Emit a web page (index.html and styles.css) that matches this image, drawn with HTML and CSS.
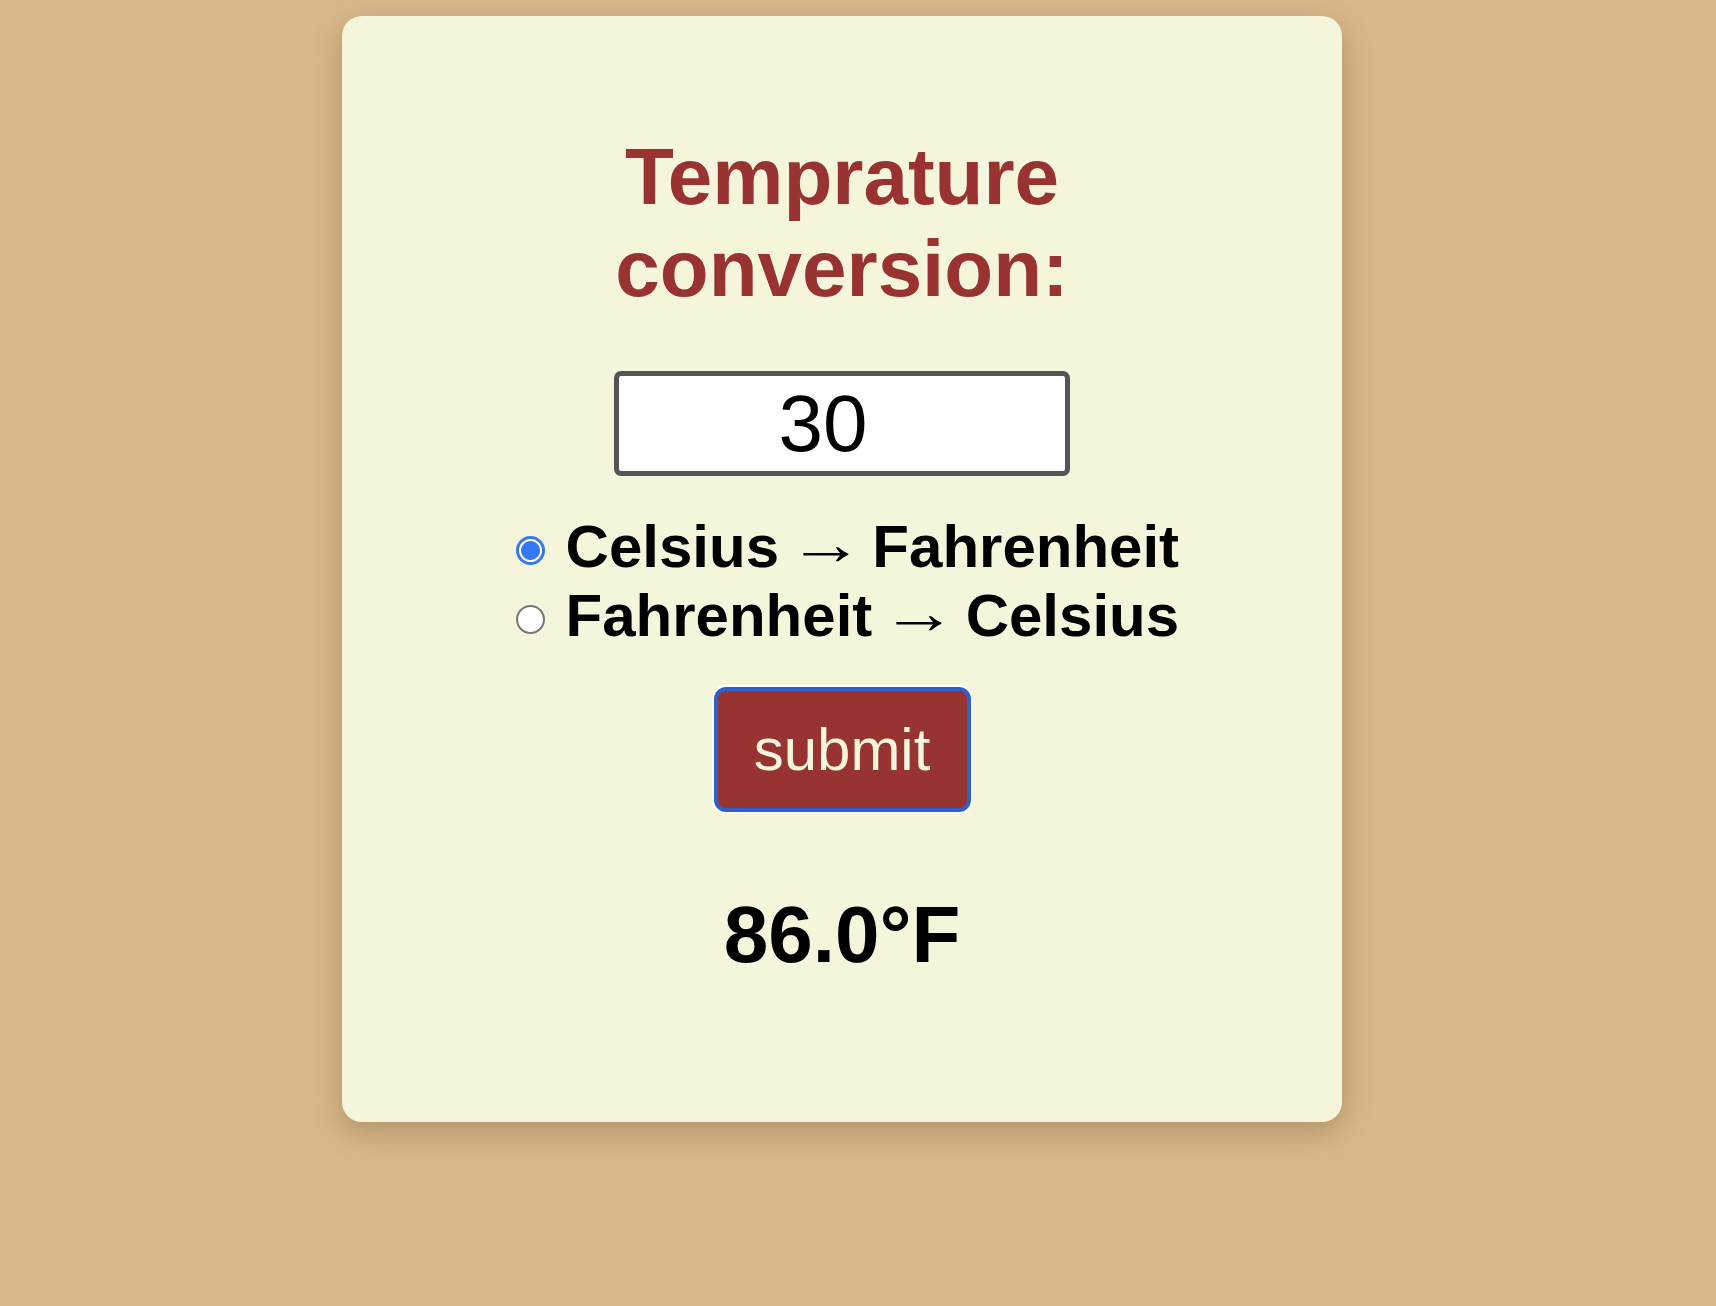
FILE: index.html
```html
<!DOCTYPE html>
<html lang="en">
<head>
<meta charset="utf-8">
<title>Temprature conversion</title>
<link rel="stylesheet" href="styles.css">
</head>
<body>
<main class="card">
  <h1 class="title">Temprature conversion:</h1>
  <input class="temp-input" type="text" inputmode="decimal" value="30">
  <div class="options">
    <label class="option"><input class="radio" type="radio" name="mode" checked> Celsius <span class="arrow">→</span> Fahrenheit</label>
    <label class="option"><input class="radio" type="radio" name="mode"> Fahrenheit <span class="arrow">→</span> Celsius</label>
  </div>
  <button class="submit" type="button">submit</button>
  <p class="result">86.0°F</p>
</main>
</body>
</html>
```
FILE: styles.css
```css
html, body {
  margin: 0;
  padding: 0;
}
body {
  background: #d7b88b;
  font-family: "Liberation Sans", Arial, sans-serif;
  min-height: 1306px;
  padding-top: 16px;
  box-sizing: border-box;
}
.card {
  width: 1000px;
  box-sizing: border-box;
  margin-left: 342px;
  background: #f5f5dc;
  border-radius: 20px;
  box-shadow: 0 10px 30px rgba(90, 60, 20, 0.3);
  padding: 115px 0 141px;
  display: flex;
  flex-direction: column;
  align-items: center;
  text-align: center;
}
.title {
  margin: 0;
  max-width: 600px;
  font-size: 80px;
  line-height: 92px;
  font-weight: bold;
  color: #983331;
}
.temp-input {
  margin: 56px 0 0;
  width: 456px;
  height: 105px;
  box-sizing: border-box;
  border: 5px solid #555555;
  border-radius: 7px;
  background: #ffffff;
  padding: 0 38px 0 0;
  font-family: "Liberation Sans", Arial, sans-serif;
  font-size: 80px;
  line-height: 92px;
  color: #000000;
  text-align: center;
  outline: none;
}
.options {
  margin-top: 36px;
  display: flex;
  flex-direction: column;
  align-items: center;
}
.option {
  display: block;
  font-size: 60px;
  line-height: 69px;
  font-weight: bold;
  color: #000000;
  white-space: nowrap;
  padding-left: 6px;
  word-spacing: -9px;
}
.arrow {
  display: inline-block;
  margin: 0 9px;
  word-spacing: normal;
  transform: translateY(-3px) scaleX(1.27);
}
.radio {
  appearance: none;
  -webkit-appearance: none;
  width: 29px;
  height: 29px;
  margin: 0 13px 2px 5px;
  box-sizing: border-box;
  border: 2px solid #767676;
  border-radius: 50%;
  background: #ffffff;
  vertical-align: baseline;
}
.radio:checked {
  border: 3px solid #3478f6;
  background: radial-gradient(circle, #3478f6 0 9px, #ffffff 9.8px);
}
.submit {
  margin-top: 37px;
  width: 257px;
  height: 125px;
  box-sizing: border-box;
  border: 4px solid #2f5fca;
  border-radius: 12px;
  box-shadow: 0 0 0 2px #ffffff;
  background: #973331;
  color: #f5f5dc;
  font-family: "Liberation Sans", Arial, sans-serif;
  font-size: 60px;
  line-height: 69px;
  padding: 0;
}
.result {
  margin: 77px 0 0;
  font-size: 80px;
  line-height: 92px;
  font-weight: bold;
  color: #000000;
}
```
